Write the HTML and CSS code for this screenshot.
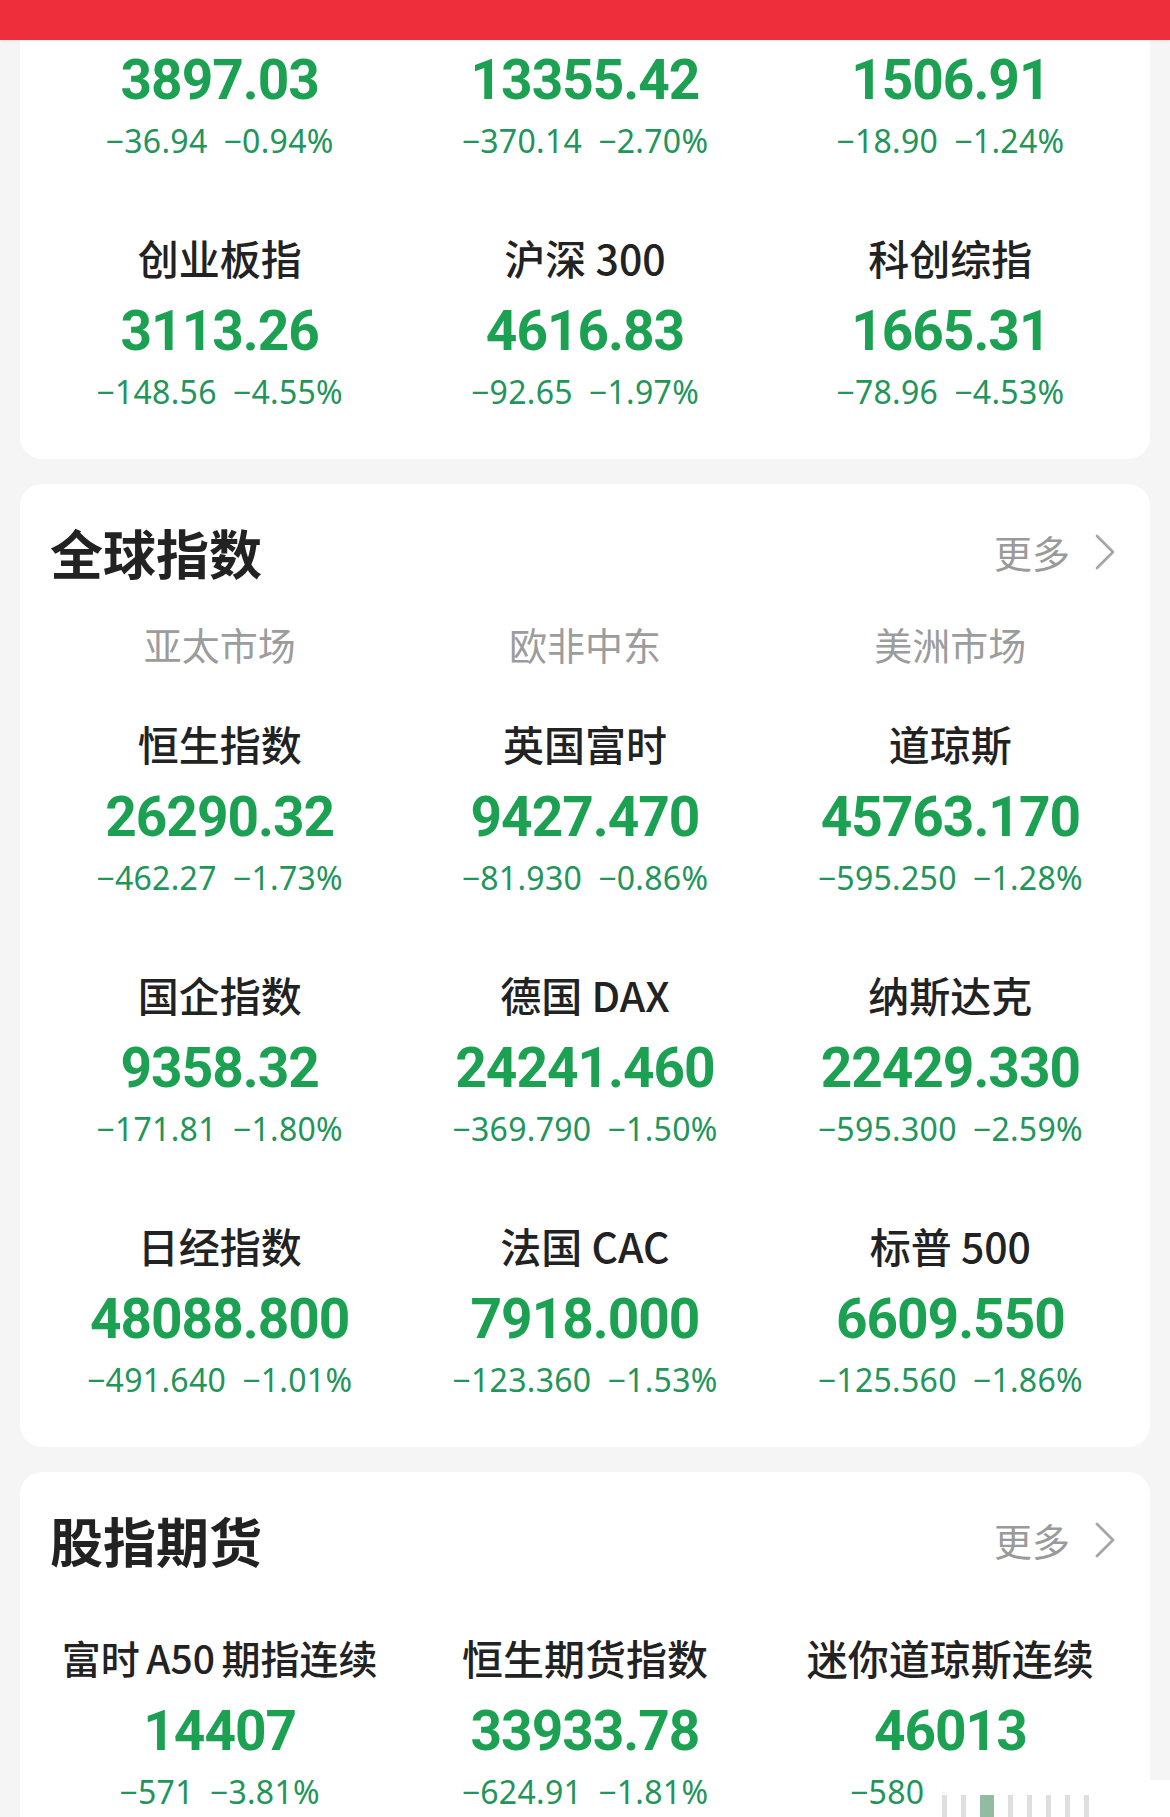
FILE: index.html
```html
<!DOCTYPE html>
<html lang="zh-CN">
<head>
<meta charset="utf-8">
<title>行情</title>
<link rel="stylesheet" href="styles.css">
</head>
<body>
<div class="topbar"></div>
<main class="page">
  <section class="card">
    <div class="card-head">
      <h2 class="card-title">沪深京指数</h2>
      <a class="more">更多<svg class="chev" viewBox="0 0 22 38" width="22" height="38"><polyline points="3,3 19,19 3,35" /></svg></a>
    </div>
    <div class="grid">
      <div class="cell"><div class="name">上证指数</div><div class="value">3897.03</div><div class="change"><span>−36.94</span><span>−0.94%</span></div></div>
      <div class="cell"><div class="name">深证成指</div><div class="value">13355.42</div><div class="change"><span>−370.14</span><span>−2.70%</span></div></div>
      <div class="cell"><div class="name">北证 50</div><div class="value">1506.91</div><div class="change"><span>−18.90</span><span>−1.24%</span></div></div>
      <div class="cell"><div class="name">创业板指</div><div class="value">3113.26</div><div class="change"><span>−148.56</span><span>−4.55%</span></div></div>
      <div class="cell"><div class="name">沪深 300</div><div class="value">4616.83</div><div class="change"><span>−92.65</span><span>−1.97%</span></div></div>
      <div class="cell"><div class="name">科创综指</div><div class="value">1665.31</div><div class="change"><span>−78.96</span><span>−4.53%</span></div></div>
    </div>
  </section>

  <section class="card">
    <div class="card-head">
      <h2 class="card-title">全球指数</h2>
      <a class="more">更多<svg class="chev" viewBox="0 0 22 38" width="22" height="38"><polyline points="3,3 19,19 3,35" /></svg></a>
    </div>
    <div class="tabs">
      <div class="tab">亚太市场</div>
      <div class="tab">欧非中东</div>
      <div class="tab">美洲市场</div>
    </div>
    <div class="grid">
      <div class="cell"><div class="name">恒生指数</div><div class="value">26290.32</div><div class="change"><span>−462.27</span><span>−1.73%</span></div></div>
      <div class="cell"><div class="name">英国富时</div><div class="value">9427.470</div><div class="change"><span>−81.930</span><span>−0.86%</span></div></div>
      <div class="cell"><div class="name">道琼斯</div><div class="value">45763.170</div><div class="change"><span>−595.250</span><span>−1.28%</span></div></div>
      <div class="cell"><div class="name">国企指数</div><div class="value">9358.32</div><div class="change"><span>−171.81</span><span>−1.80%</span></div></div>
      <div class="cell"><div class="name">德国 DAX</div><div class="value">24241.460</div><div class="change"><span>−369.790</span><span>−1.50%</span></div></div>
      <div class="cell"><div class="name">纳斯达克</div><div class="value">22429.330</div><div class="change"><span>−595.300</span><span>−2.59%</span></div></div>
      <div class="cell"><div class="name">日经指数</div><div class="value">48088.800</div><div class="change"><span>−491.640</span><span>−1.01%</span></div></div>
      <div class="cell"><div class="name">法国 CAC</div><div class="value">7918.000</div><div class="change"><span>−123.360</span><span>−1.53%</span></div></div>
      <div class="cell"><div class="name">标普 500</div><div class="value">6609.550</div><div class="change"><span>−125.560</span><span>−1.86%</span></div></div>
    </div>
  </section>

  <section class="card">
    <div class="card-head">
      <h2 class="card-title">股指期货</h2>
      <a class="more">更多<svg class="chev" viewBox="0 0 22 38" width="22" height="38"><polyline points="3,3 19,19 3,35" /></svg></a>
    </div>
    <div class="grid">
      <div class="cell"><div class="name name-tight">富时&#8198;A50&#8198;期指连续</div><div class="value">14407</div><div class="change"><span>−571</span><span>−3.81%</span></div></div>
      <div class="cell"><div class="name">恒生期货指数</div><div class="value">33933.78</div><div class="change"><span>−624.91</span><span>−1.81%</span></div></div>
      <div class="cell"><div class="name">迷你道琼斯连续</div><div class="value">46013</div><div class="change"><span>−580</span><span>−1.24%</span></div></div>
    </div>
  </section>
</main>
<div class="watermark"><i></i><i></i><i class="dark"></i><i></i><i></i><i></i><i></i><i></i></div>
</body>
</html>
```

FILE: styles.css
```css
html, body {
  margin: 0;
  padding: 0;
}
body {
  width: 1170px;
  height: 1817px;
  overflow: hidden;
  background: #f5f5f5;
  font-family: "Noto Sans CJK SC", "Noto Sans", sans-serif;
  color: #222;
}
.topbar {
  position: fixed;
  top: 0;
  left: 0;
  right: 0;
  height: 40px;
  background: #ee2f3b;
  box-shadow: 0 1px 3px rgba(0,0,0,0.08);
  z-index: 10;
}
.page {
  margin-top: -179px;
  padding: 0 20px;
  display: flex;
  flex-direction: column;
  gap: 25px;
}
.card {
  background: #fff;
  border-radius: 22px;
}
.card-head {
  height: 136px;
  display: flex;
  align-items: center;
  justify-content: space-between;
  padding: 0 34px 0 30px;
}
.card-title {
  margin: 0;
  font-size: 53px;
  font-weight: 700;
  color: #222;
  line-height: 1;
}
.more {
  display: flex;
  align-items: center;
  gap: 24px;
  font-size: 38px;
  color: #9a9a9a;
  line-height: 1;
}
.chev polyline {
  fill: none;
  stroke: #a6a6a6;
  stroke-width: 2.8;
  stroke-linecap: round;
  stroke-linejoin: round;
}
.tabs {
  display: grid;
  grid-template-columns: repeat(3, 1fr);
  padding: 0 17px;
  margin-bottom: 26px;
}
.tab {
  text-align: center;
  font-size: 38px;
  line-height: 48px;
  color: #9c9c9c;
}
.grid {
  display: grid;
  grid-template-columns: repeat(3, 1fr);
  padding: 0 17px;
}
.cell {
  padding: 24px 0 49px;
  text-align: center;
  white-space: nowrap;
}
.name {
  font-size: 41px;
  line-height: 50px;
  margin-bottom: 6px;
  font-weight: 500;
  color: #222;
}
.name-tight {
  font-size: 39px;
}
.value {
  font-family: Roboto, "Liberation Sans", sans-serif;
  font-size: 55px;
  line-height: 86px;
  font-weight: 700;
  letter-spacing: -1px;
  color: #1ca153;
}
.change {
  font-family: "Noto Sans", Roboto, sans-serif;
  font-size: 32px;
  line-height: 36px;
  font-weight: 400;
  letter-spacing: 0.3px;
  color: #21955a;
  display: flex;
  justify-content: center;
  gap: 16px;
}
.watermark {
  position: fixed;
  left: 930px;
  top: 1780px;
  width: 240px;
  height: 37px;
  background: linear-gradient(to right, rgba(255,255,255,0.6), #fff 18px);
  display: flex;
  align-items: flex-end;
  gap: 14px;
  padding-left: 12px;
}
.watermark i {
  display: block;
  width: 5px;
  height: 22px;
  background: rgba(150,150,150,0.3);
}
.watermark i.dark {
  width: 14px;
  background: rgba(40,120,70,0.5);
}
```
